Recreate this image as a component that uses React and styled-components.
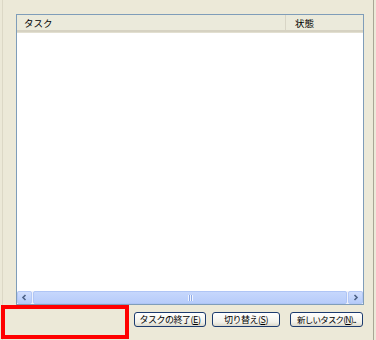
import React from "react";
import styled, {createGlobalStyle} from "styled-components";

const Global = createGlobalStyle`
  html, body {
    margin: 0;
    padding: 0;
    background: #ECE9D8;
  }
  body {
    font-family: "Noto Sans CJK JP", "Liberation Sans", sans-serif;
  }
`

const Frame = styled.div`
  position: relative;
  box-sizing: border-box;
  margin-left: 2px;
  width: 372px;
  height: 340px;
  padding: 14px 9px 0 13px;
  border-left: 1px solid #DCD8C6;
  border-right: 1px solid #A9A796;
  background: #ECE9D8;
`

const ListBox = styled.div`
  box-sizing: border-box;
  width: 348px;
  height: 291px;
  border: 1px solid #7F9DB9;
  background: #fff;
  display: flex;
  flex-direction: column;
`

const Header = styled.div`
  display: flex;
  height: 15px;
  background: #EBEADB;
  border-bottom: 2px solid #D6D2C2;
  box-shadow: 0 1px 0 #E2DFD0;
`

const HeadCell = styled.div`
  box-sizing: border-box;
  width: ${p => p.$w}px;
  flex: ${p => p.$grow ? 1 : "none"};
  padding-left: ${p => p.$pad}px;
  font-size: 9.5px;
  line-height: 16px;
  color: #000;
  border-right: ${p => p.$divider ? "1px solid #D8D5C6" : "none"};
  white-space: nowrap;
`

const Rows = styled.div`
  flex: 1;
`

const ScrollBar = styled.div`
  display: flex;
  height: 13px;
  background: #EEF1FB;
`

const ArrowBtn = styled.div`
  box-sizing: border-box;
  width: 15px;
  height: 13px;
  border: 1px solid #B4C8F6;
  border-radius: 2px;
  background: linear-gradient(#D2DFFD, #B5CBF9);
  display: flex;
  align-items: center;
  justify-content: center;
`

const Thumb = styled.div`
  flex: 1;
  box-sizing: border-box;
  margin: 0 1px;
  border: 1px solid #AFC5F5;
  border-radius: 2px;
  background: linear-gradient(#C6D7FC, #B7CCFA);
  display: flex;
  align-items: center;
  justify-content: center;
`

const Grip = styled.div`
  width: 5px;
  height: 6px;
  background: repeating-linear-gradient(90deg, #EEF3FE 0 1px, #8DAAE8 1px 2px);
`

const ButtonRow = styled.div`
  display: flex;
  justify-content: flex-end;
  align-items: center;
  width: 347px;
  margin-top: 7px;
`

const Button = styled.div`
  box-sizing: border-box;
  display: flex;
  justify-content: center;
  width: ${p => p.$w}px;
  margin-left: ${p => p.$gap}px;
  height: 15px;
  border: 1px solid #1C3B6E;
  border-radius: 3px;
  background: linear-gradient(#FFFFFF, #F2F1EA 70%, #DCD9CB);
  font-size: ${p => p.$fs ?? 9}px;
  line-height: 13px;
  color: #000;
  white-space: nowrap;
  letter-spacing: ${p => p.$ls ?? -0.5}px;
`

const Key = styled.span`
  text-decoration: underline;
`

const Marker = styled.div`
  position: absolute;
  left: -2px;
  top: 305px;
  width: 128px;
  height: 34px;
  box-sizing: border-box;
  border: 4px solid #FF0000;
`

const Chevron = ({dir}) => (
    <svg width="7" height="7" viewBox="0 0 7 7">
        <path d={dir === "left" ? "M4.5 1 L2 3.5 L4.5 6" : "M2.5 1 L5 3.5 L2.5 6"}
              fill="none" stroke="#4D6185" strokeWidth="1.6"/>
    </svg>
)

const App = () => {
    return (
        <>
            <Global/>
            <Frame>
                <ListBox>
                    <Header>
                        <HeadCell $w={269} $pad={7} $divider>タスク</HeadCell>
                        <HeadCell $grow $pad={9}>状態</HeadCell>
                    </Header>
                    <Rows/>
                    <ScrollBar>
                        <ArrowBtn><Chevron dir="left"/></ArrowBtn>
                        <Thumb><Grip/></Thumb>
                        <ArrowBtn><Chevron dir="right"/></ArrowBtn>
                    </ScrollBar>
                </ListBox>

                <ButtonRow>
                    <Button $w={72} $gap={0}><span>タスクの終了(<Key>E</Key>)</span></Button>
                    <Button $w={68} $gap={6}><span>切り替え(<Key>S</Key>)</span></Button>
                    <Button $w={73} $gap={10} $fs={8.5} $ls={-0.8}><span>新しいタスク(<Key>N</Key>)..</span></Button>
                </ButtonRow>

                <Marker/>
            </Frame>
        </>
    )
}

export default App;
